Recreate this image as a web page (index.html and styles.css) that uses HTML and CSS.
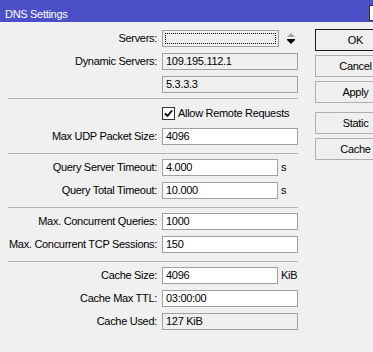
FILE: index.html
```html
<!DOCTYPE html>
<html lang="en">
<head>
    <meta charset="UTF-8">
    <meta name="viewport" content="width=device-width, initial-scale=1.0">
    <title>DNS Settings</title>
    <link rel="stylesheet" href="styles.css">
</head>
<body>
    <div class="window">
        <div class="title-bar">
            <span class="title">DNS Settings</span>
            <span class="title-box"></span>
        </div>

        <div class="content">
            <div class="form">
                <div class="row">
                    <label class="label">Servers:</label>
                    <div class="field combo"><span class="focus"></span></div>
                    <svg class="spinner" width="10" height="13" viewBox="0 0 10 13">
                        <polygon points="5,1 9,5 1,5" fill="#a0a0a0"/>
                        <rect x="1" y="7" width="8" height="1" fill="#000"/>
                        <polygon points="1,8 9,8 5,12" fill="#000"/>
                    </svg>
                </div>
                <div class="row">
                    <label class="label">Dynamic Servers:</label>
                    <div class="field wide disabled">109.195.112.1</div>
                </div>
                <div class="row">
                    <label class="label"></label>
                    <div class="field wide disabled">5.3.3.3</div>
                </div>

                <div class="separator first"></div>

                <div class="row check-row">
                    <label class="label"></label>
                    <span class="checkbox">
                        <svg width="11" height="11" viewBox="0 0 11 11">
                            <path d="M2 5.5 L4.5 8 L9 2.5" fill="none" stroke="#000" stroke-width="1.8"/>
                        </svg>
                    </span>
                    <span class="check-text">Allow Remote Requests</span>
                </div>
                <div class="row">
                    <label class="label">Max UDP Packet Size:</label>
                    <div class="field wide">4096</div>
                </div>

                <div class="separator"></div>

                <div class="row">
                    <label class="label">Query Server Timeout:</label>
                    <div class="field">4.000</div>
                    <span class="unit">s</span>
                </div>
                <div class="row">
                    <label class="label">Query Total Timeout:</label>
                    <div class="field">10.000</div>
                    <span class="unit">s</span>
                </div>

                <div class="separator"></div>

                <div class="row">
                    <label class="label">Max. Concurrent Queries:</label>
                    <div class="field wide">1000</div>
                </div>
                <div class="row">
                    <label class="label">Max. Concurrent TCP Sessions:</label>
                    <div class="field wide">150</div>
                </div>

                <div class="separator"></div>

                <div class="row">
                    <label class="label">Cache Size:</label>
                    <div class="field">4096</div>
                    <span class="unit">KiB</span>
                </div>
                <div class="row">
                    <label class="label">Cache Max TTL:</label>
                    <div class="field wide">03:00:00</div>
                </div>
                <div class="row">
                    <label class="label">Cache Used:</label>
                    <div class="field wide disabled">127 KiB</div>
                </div>
            </div>

            <div class="buttons">
                <button class="btn default">OK</button>
                <button class="btn">Cancel</button>
                <button class="btn">Apply</button>
                <button class="btn spaced">Static</button>
                <button class="btn">Cache</button>
            </div>
        </div>
    </div>
</body>
</html>
```

FILE: styles.css
```css
/* Base */
body {
    margin: 0;
    padding: 0;
    overflow: hidden;
    background-color: #f0f0f0;
    font-family: 'Liberation Sans', Arial, sans-serif;
    font-size: 11px;
    letter-spacing: -0.3px;
    color: #000;
}

.window {
    width: 373px;
    height: 352px;
    position: relative;
    overflow: hidden;
}

/* Title bar */
.title-bar {
    height: 22px;
    box-sizing: border-box;
    padding: 7px 0 0 5px;
    line-height: 14px;
    background-color: #4b50c9;
    color: #fff;
    position: relative;
}

.title-box {
    position: absolute;
    left: 369px;
    top: 5px;
    width: 14px;
    height: 14px;
    background-color: #fff;
    border: 1px solid #333;
}

/* Layout */
.content {
    display: flex;
    padding-top: 8px;
}

.form {
    display: flex;
    flex-direction: column;
    width: 290px;
    margin-left: 8px;
}

.buttons {
    display: flex;
    flex-direction: column;
    gap: 4px;
    margin-left: 17px;
    margin-top: -1px;
}

/* Rows */
.row {
    display: flex;
    align-items: center;
    height: 17px;
    line-height: 17px;
    margin-bottom: 6px;
    flex-shrink: 0;
}

.label {
    width: 149px;
    margin-right: 5px;
    text-align: right;
    white-space: nowrap;
    flex-shrink: 0;
}

.field {
    width: 116px;
    height: 17px;
    box-sizing: border-box;
    border: 1px solid #a0a0a0;
    background-color: #fff;
    padding-left: 3px;
    line-height: 15px;
    white-space: nowrap;
}

.field.wide {
    width: 136px;
}

.field.disabled {
    background-color: #f0f0f0;
}

.combo {
    width: 117px;
    background-color: #f0f0f0;
    padding: 2px;
}

.focus {
    display: block;
    height: 100%;
    box-sizing: border-box;
    border: 1px dotted #000;
}

.spinner {
    margin-left: 7px;
}

.unit {
    margin-left: 3px;
}

/* Checkbox */
.check-row {
    height: 18px;
}

.checkbox {
    width: 13px;
    height: 13px;
    box-sizing: border-box;
    border: 1px solid #333;
    background-color: #fff;
    display: flex;
    align-items: center;
    justify-content: center;
    margin-right: 3px;
}

.check-text {
    white-space: nowrap;
}

.separator {
    height: 1px;
    flex-shrink: 0;
    background-color: #b4b4b4;
    margin: 2px 0 5px;
}

.separator.first {
    margin-top: -1px;
}

/* Buttons */
.btn {
    width: 81px;
    height: 22px;
    box-sizing: border-box;
    border: 1px solid #adadad;
    background-color: #efefef;
    font-family: inherit;
    font-size: 11px;
    letter-spacing: -0.3px;
    color: #000;
    padding: 0;
}

.btn.default {
    border-color: #1a1a1a;
}

.btn.spaced {
    margin-top: 5px;
}
```
